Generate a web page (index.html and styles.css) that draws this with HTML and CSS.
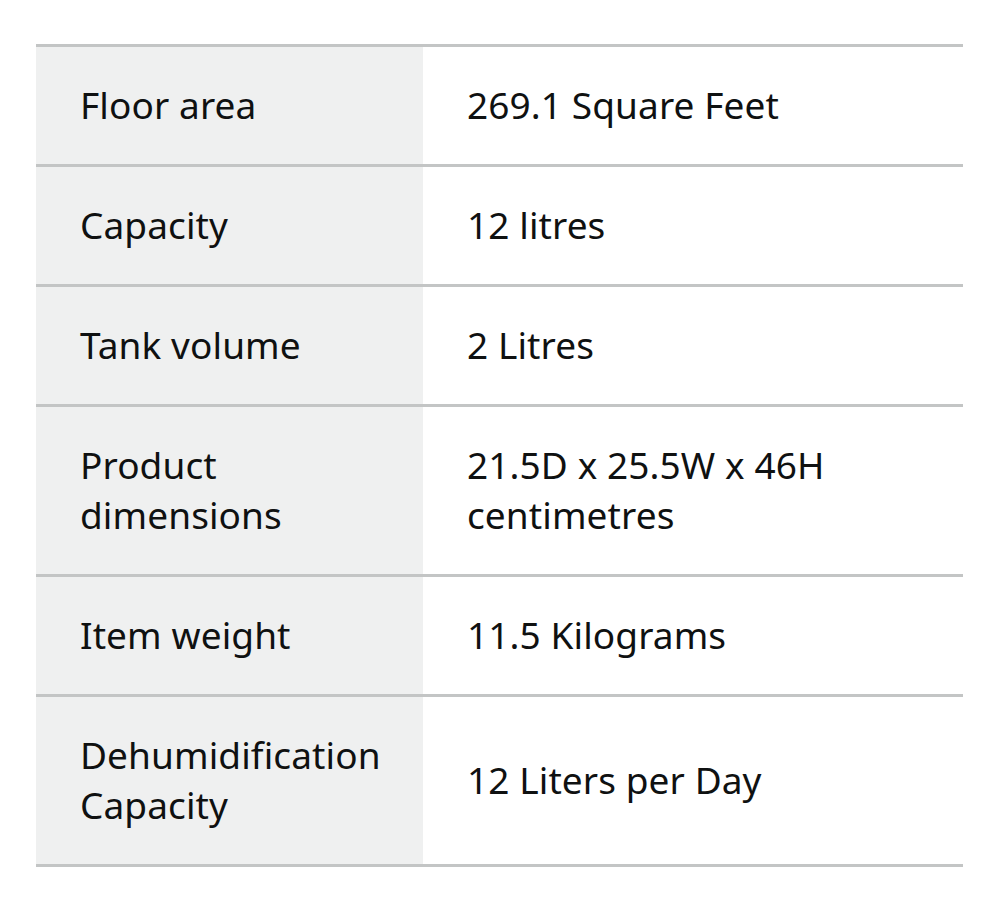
FILE: index.html
```html
<!DOCTYPE html>
<html lang="en">
<head>
<meta charset="utf-8">
<title>Product specifications</title>
<link rel="stylesheet" href="styles.css">
</head>
<body>
<table class="specs">
  <tbody>
    <tr><th>Floor area</th><td>269.1 Square Feet</td></tr>
    <tr><th>Capacity</th><td>12 litres</td></tr>
    <tr><th>Tank volume</th><td>2 Litres</td></tr>
    <tr><th>Product dimensions</th><td>21.5D x 25.5W x 46H centimetres</td></tr>
    <tr><th>Item weight</th><td>11.5 Kilograms</td></tr>
    <tr><th>Dehumidification Capacity</th><td>12 Liters per Day</td></tr>
  </tbody>
</table>
</body>
</html>
```

FILE: styles.css
```css
html, body {
  margin: 0;
  padding: 0;
  background: #ffffff;
}

body {
  font-family: "Noto Sans", "Open Sans", sans-serif;
  color: #0f1111;
}

.specs {
  margin: 44px 0 0 36px;
  width: 927px;
  border-collapse: collapse;
  table-layout: fixed;
}

.specs tr {
  border-top: 3px solid #c3c5c5;
}

.specs tr:last-child {
  border-bottom: 3px solid #c3c5c5;
}

.specs th,
.specs td {
  padding: 33px 30px 34px 44px;
  font-size: 37px;
  line-height: 50px;
  font-weight: 400;
  letter-spacing: 0.1px;
  text-align: left;
  vertical-align: middle;
}

.specs th {
  width: 387px;
  box-sizing: border-box;
  background: #eff0f0;
}
```
